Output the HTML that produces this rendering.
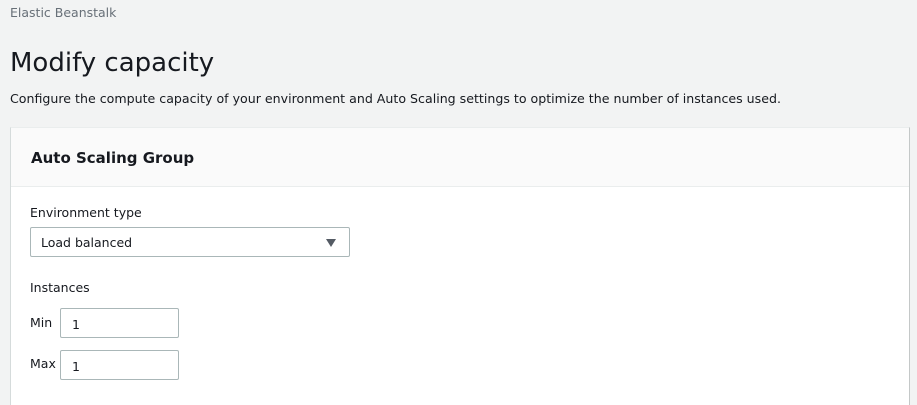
<!DOCTYPE html>
<html><head><style>
html,body{margin:0;width:917px;height:405px;overflow:hidden}
body{background:#f2f3f3;font-family:"DejaVu Sans","Liberation Sans",sans-serif;color:#16191f;position:relative}
.bc{position:absolute;left:10px;top:5px;font-size:12.5px;color:#687078}
h1{position:absolute;left:10px;top:45px;margin:0;font-weight:normal;font-size:26px;line-height:36px}
.desc{position:absolute;left:10px;top:91px;font-size:12.6px}
.panel{position:absolute;left:10px;top:127px;width:900px;height:278px;background:#fff;border-left:1px solid #d5dbdb;border-top:1px solid #eaeded;border-right:1px solid #c4c8c8;box-sizing:border-box}
.ph{height:59px;background:#fafafa;border-bottom:1px solid #eaeded;box-sizing:border-box}
.ph span{position:absolute;left:20px;top:21px;font-weight:bold;font-size:15px}
.lbl{position:absolute;font-size:12.5px}
.sel{position:absolute;left:30px;top:227px;width:320px;height:30px;border:1px solid #aab7b8;border-radius:2px;box-sizing:border-box;background:#fff}
.sel span{position:absolute;left:10px;top:7px;font-size:12.5px}
.tri{position:absolute;right:13px;top:11px;width:0;height:0;border-left:5px solid transparent;border-right:5px solid transparent;border-top:8px solid #545b64}
.inp{position:absolute;left:60px;width:119px;height:30px;border:1px solid #aab7b8;border-radius:2px;box-sizing:border-box;background:#fff}
.inp span{position:absolute;left:11px;top:8px;font-size:12.5px}
</style></head><body>
<div class="bc">Elastic Beanstalk</div>
<h1>Modify capacity</h1>
<div class="desc">Configure the compute capacity of your environment and Auto Scaling settings to optimize the number of instances used.</div>
<div class="panel"><div class="ph"><span>Auto Scaling Group</span></div></div>
<div class="lbl" style="left:30px;top:205px">Environment type</div>
<div class="sel"><span>Load balanced</span><div class="tri"></div></div>
<div class="lbl" style="left:30px;top:280px">Instances</div>
<div class="lbl" style="left:30px;top:315px">Min</div>
<div class="inp" style="top:308px"><span>1</span></div>
<div class="lbl" style="left:30px;top:356px">Max</div>
<div class="inp" style="top:350px"><span>1</span></div>
</body></html>
